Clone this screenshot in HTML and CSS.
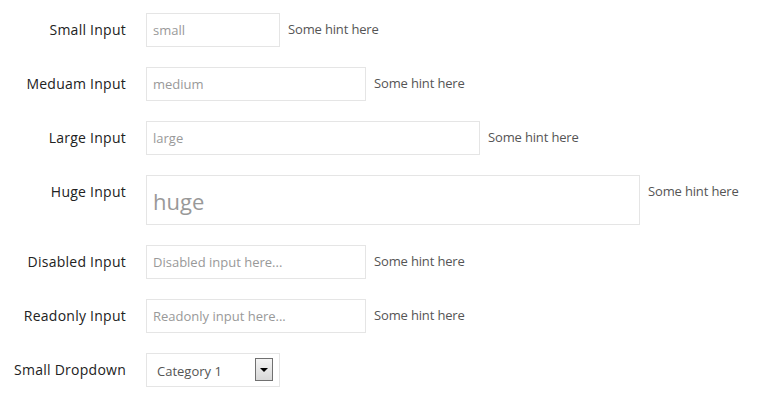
FILE: index.html
```html
<!DOCTYPE html>
<html>
  <head>
    <title>Input sizes</title>
    <link rel="stylesheet" href="styles.css">
  </head>
  <body>
    <form class="form-horizontal">
      <div class="form-row">
        <label class="control-label">Small Input</label>
        <div class="controls">
          <input type="text" class="input input-small" placeholder="small">
          <span class="hint">Some hint here</span>
        </div>
      </div>

      <div class="form-row">
        <label class="control-label">Meduam Input</label>
        <div class="controls">
          <input type="text" class="input input-medium" placeholder="medium">
          <span class="hint">Some hint here</span>
        </div>
      </div>

      <div class="form-row">
        <label class="control-label">Large Input</label>
        <div class="controls">
          <input type="text" class="input input-large" placeholder="large">
          <span class="hint">Some hint here</span>
        </div>
      </div>

      <div class="form-row">
        <label class="control-label">Huge Input</label>
        <div class="controls">
          <input type="text" class="input input-huge" placeholder="huge">
          <span class="hint">Some hint here</span>
        </div>
      </div>

      <div class="form-row">
        <label class="control-label">Disabled Input</label>
        <div class="controls">
          <input type="text" class="input input-medium" placeholder="Disabled input here..." disabled>
          <span class="hint">Some hint here</span>
        </div>
      </div>

      <div class="form-row">
        <label class="control-label">Readonly Input</label>
        <div class="controls">
          <input type="text" class="input input-medium" placeholder="Readonly input here..." readonly>
          <span class="hint">Some hint here</span>
        </div>
      </div>

      <div class="form-row">
        <label class="control-label">Small Dropdown</label>
        <div class="controls">
          <div class="select-wrap input-small">
            <select class="select">
              <option>Category 1</option>
              <option>Category 2</option>
              <option>Category 3</option>
            </select>
            <span class="select-arrow"></span>
          </div>
        </div>
      </div>
    </form>
  </body>
</html>
```

FILE: styles.css
```css
body {
  background: #fff;
  margin: 0;
  font-family: 'Open Sans', sans-serif;
}

.form-horizontal {
  padding-top: 13px;
}

.form-row {
  display: grid;
  grid-template-columns: 126px 1fr;
  column-gap: 20px;
  margin-bottom: 20px;
}

.control-label {
  color: #222;
  font-size: 14px;
  letter-spacing: 0.25px;
  line-height: 20px;
  padding-top: 7px;
  text-align: right;
  white-space: nowrap;
}

.controls {
  display: flex;
  align-items: flex-start;
  gap: 8px;
}

.input {
  box-sizing: border-box;
  height: 34px;
  margin: 0;
  padding: 0 6px;
  background: #fff;
  border: 1px solid #e5e5e5;
  border-radius: 0;
  color: #555;
  font-family: 'Open Sans', sans-serif;
  font-size: 13px;
  outline: none;
}

.input::placeholder {
  color: #999;
}

.input-small {
  width: 134px;
}

.input-medium {
  width: 220px;
}

.input-large {
  width: 334px;
}

.input-huge {
  width: 494px;
  height: 50px;
  padding-top: 2px;
  font-size: 22px;
}

.hint {
  color: #555;
  font-size: 13px;
  letter-spacing: -0.15px;
  line-height: 20px;
  padding-top: 6px;
  white-space: nowrap;
}

.select-wrap {
  position: relative;
  box-sizing: border-box;
  height: 34px;
  border: 1px solid #e5e5e5;
}

.select {
  -webkit-appearance: none;
  appearance: none;
  width: 100%;
  height: 32px;
  padding: 2px 10px 0;
  background: #fff;
  border: 0;
  color: #555;
  font-family: 'Open Sans', sans-serif;
  font-size: 13px;
  outline: none;
}

.select-arrow {
  position: absolute;
  top: 4px;
  right: 6px;
  box-sizing: border-box;
  width: 18px;
  height: 23px;
  border: 1px solid #707070;
  background: linear-gradient(#f4f4f4, #d8d8d8);
  pointer-events: none;
}

.select-arrow::after {
  content: "";
  position: absolute;
  top: 9px;
  left: 4px;
  border-left: 4px solid transparent;
  border-right: 4px solid transparent;
  border-top: 4px solid #000;
}
```
